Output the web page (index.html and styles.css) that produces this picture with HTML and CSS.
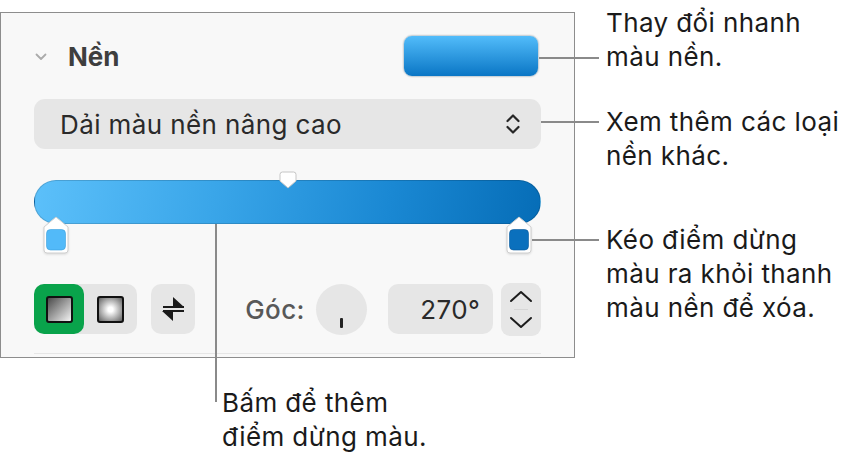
FILE: index.html
```html
<!DOCTYPE html>
<html lang="vi">
<head>
  <meta charset="UTF-8">
  <meta name="viewport" content="width=device-width, initial-scale=1.0">
  <title>Nền - Dải màu</title>
  <link rel="stylesheet" href="styles.css">
</head>
<body>
  <div class="figure">
    <div class="panel">
      <div class="section-head">
        <svg class="disclosure" width="12" height="8" viewBox="0 0 12 8"><path d="M1.5 1.5 L6 6 L10.5 1.5" fill="none" stroke="#ababab" stroke-width="1.8" stroke-linecap="round" stroke-linejoin="round"/></svg>
        <h2>Nền</h2>
        <div class="color-well"></div>
      </div>

      <div class="popup">
        <span>Dải màu nền nâng cao</span>
        <svg width="18" height="26" viewBox="0 0 18 26"><path d="M3.5 10 L9 4.5 L14.5 10 M3.5 16 L9 21.5 L14.5 16" fill="none" stroke="#262626" stroke-width="2.2" stroke-linecap="round" stroke-linejoin="round"/></svg>
      </div>

      <div class="gradient">
        <div class="gradient-bar"></div>
        <svg class="midpoint" width="18" height="18" viewBox="0 0 18 18"><path d="M3.5 1 H14.5 Q17 1 17 3.5 V10 L9 17 L1 10 V3.5 Q1 1 3.5 1 Z" fill="#fff" stroke="#c6c6c6" stroke-width="1"/></svg>
        <div class="stops">
          <svg class="stop" style="--pos: 0" width="26" height="38" viewBox="0 0 26 38"><path d="M13 1 L25 11 V34 Q25 37 22 37 H4 Q1 37 1 34 V11 Z" fill="#fff" stroke="#cfcfcf" stroke-width="1"/><rect x="3.5" y="13.5" width="19" height="20.5" rx="4" fill="#52baf9" stroke="#3a9fdc" stroke-width="0.6"/></svg>
          <svg class="stop" style="--pos: 1" width="26" height="38" viewBox="0 0 26 38"><path d="M13 1 L25 11 V34 Q25 37 22 37 H4 Q1 37 1 34 V11 Z" fill="#fff" stroke="#cfcfcf" stroke-width="1"/><rect x="3.5" y="13.5" width="19" height="20.5" rx="4" fill="#0a70bd" stroke="#07589a" stroke-width="0.6"/></svg>
        </div>
      </div>

      <div class="controls">
        <div class="segmented">
          <div class="seg seg-on">
            <span class="swatch swatch-linear"></span>
          </div>
          <div class="seg">
            <span class="swatch swatch-radial"></span>
          </div>
        </div>
        <div class="icon-btn">
          <svg width="26" height="30" viewBox="0 0 26 30"><path d="M3 13 H24 M3 17 H24" stroke="#1a1a1a" stroke-width="2.2"/><path d="M13 3 L24 13 H13 Z M13 27 L2 17 H13 Z" fill="#1a1a1a"/></svg>
        </div>
        <span class="angle-label">Góc:</span>
        <div class="knob"><span class="knob-tick"></span></div>
        <div class="number-field">270°</div>
        <div class="stepper">
          <svg width="28" height="53" viewBox="0 0 28 53"><path d="M4 18 L14 9 L24 18" fill="none" stroke="#1c1c1c" stroke-width="2" stroke-linecap="round" stroke-linejoin="round"/><path d="M7 26.5 H21" stroke="#d6d6d6" stroke-width="1"/><path d="M4 35 L14 44 L24 35" fill="none" stroke="#1c1c1c" stroke-width="2" stroke-linecap="round" stroke-linejoin="round"/></svg>
        </div>
      </div>

      <div class="panel-rule"></div>
    </div>

    <div class="notes">
      <p class="note note-well">Thay đổi nhanh<br>màu nền.</p>
      <p class="note note-popup">Xem thêm các loại<br>nền khác.</p>
      <p class="note note-stop">Kéo điểm dừng<br>màu ra khỏi thanh<br>màu nền để xóa.</p>
    </div>

    <p class="note note-add">Bấm để thêm<br>điểm dừng màu.</p>

    <!-- leader lines -->
    <span class="leader leader-well"></span>
    <span class="leader leader-popup"></span>
    <span class="leader leader-stop"></span>
    <span class="leader leader-add"></span>
  </div>
</body>
</html>
```

FILE: styles.css
```css
body {
  margin: 0;
  background: #fff;
  font-family: Inter, "Noto Sans", sans-serif;
  color: #1d1d1d;
  letter-spacing: 0.4px;
}
.figure {
  position: relative;
  width: 859px;
  height: 455px;
  display: grid;
  grid-template-columns: 575px 1fr;
  grid-template-rows: 358px 1fr;
  column-gap: 31px;
}
.panel {
  margin-top: 12px;
  box-sizing: border-box;
  height: 346px;
  border: 1px solid #8d8d8d;
  background: #f8f8f8;
  padding: 22px 33px 0 33px;
  position: relative;
}
.section-head {
  display: flex;
  align-items: center;
  height: 42px;
}
.disclosure {
  margin-left: 1px;
  margin-top: 2px;
}
.section-head h2 {
  margin: 0 0 0 21px;
  font-size: 26px;
  font-weight: 700;
  letter-spacing: 0;
  color: #3e3e3e;
  flex: 1;
}
.color-well {
  width: 136px;
  height: 42px;
  margin-right: 2px;
  box-sizing: border-box;
  border-radius: 9px;
  border: 1px solid #c9d3da;
  background: linear-gradient(#52bcfa, #0a76c5);
  box-shadow: 0 0 0 1px rgba(0, 0, 0, 0.04);
}
.popup {
  margin-top: 22px;
  height: 50px;
  border-radius: 11px;
  background: #e6e6e6;
  display: flex;
  align-items: center;
  justify-content: space-between;
  padding: 0 19px 0 26px;
  font-size: 26px;
  color: #2a2a2a;
}
.gradient {
  position: relative;
  margin-top: 31px;
}
.gradient-bar {
  height: 44px;
  box-sizing: border-box;
  border-radius: 22px;
  border: 1px solid rgba(0, 0, 0, 0.14);
  background: linear-gradient(100deg, #5cc0fa 0%, #3aa6e9 35%, #1a88d3 70%, #066db7 100%);
}
.midpoint {
  position: absolute;
  top: -9px;
  left: 245px;
}
.stops {
  position: relative;
  height: 37px;
  margin-top: -8px;
}
.stop {
  position: absolute;
  top: 0;
  left: calc(22px + (100% - 44px) * var(--pos));
  transform: translateX(-50%);
  filter: drop-shadow(0 1px 1px rgba(0, 0, 0, 0.12));
}
.controls {
  display: flex;
  align-items: center;
  height: 50px;
  margin-top: 31px;
}
.segmented {
  display: flex;
  background: #e5e5e5;
  border-radius: 10px;
  width: 104px;
  height: 50px;
}
.seg {
  width: 52px;
  display: flex;
  align-items: center;
  justify-content: center;
  border-radius: 10px;
}
.seg-on {
  width: 50px;
  background: #09a34b;
}
.swatch {
  width: 27px;
  height: 27px;
  box-sizing: border-box;
  border: 2.5px solid #111;
  border-radius: 3px;
}
.swatch-linear {
  background: linear-gradient(135deg, #4a4a4a, #f4f4f4);
}
.swatch-radial {
  background: radial-gradient(circle, #fff 15%, #6a6a6a 95%);
}
.icon-btn {
  margin-left: 14px;
  width: 44px;
  height: 50px;
  border-radius: 10px;
  background: #e6e6e6;
  display: flex;
  align-items: center;
  justify-content: center;
}
.angle-label {
  margin-left: 50px;
  font-size: 26px;
  font-weight: 500;
  color: #585858;
}
.knob {
  margin-left: 11px;
  width: 51px;
  height: 51px;
  border-radius: 50%;
  background: #e6e6e6;
  position: relative;
}
.knob-tick {
  position: absolute;
  left: 24px;
  top: 34px;
  width: 3px;
  height: 10px;
  border-radius: 1px;
  background: #222;
}
.number-field {
  margin-left: 21px;
  width: 106px;
  height: 50px;
  box-sizing: border-box;
  border-radius: 10px;
  background: #e6e6e6;
  font-size: 26px;
  color: #2a2a2a;
  display: flex;
  align-items: center;
  justify-content: flex-end;
  padding-right: 13px;
}
.stepper {
  margin-left: 8px;
  width: 40px;
  height: 53px;
  border-radius: 9px;
  background: #e6e6e6;
  display: flex;
  align-items: center;
  justify-content: center;
}
.panel-rule {
  margin-top: 19px;
  height: 1px;
  background: #e6e6e6;
}
.notes {
  padding-top: 6px;
}
.note {
  margin: 0;
  font-size: 26px;
  line-height: 34px;
  color: #1a1a1a;
}
.note-popup {
  margin-top: 31px;
}
.note-stop {
  margin-top: 50px;
}
.note-add {
  grid-column: 1 / 2;
  margin: 28px 0 0 222px;
}
.leader {
  position: absolute;
  background: #8a8a8a;
}
.leader-well { left: 539px; top: 57px; width: 60px; height: 2px; }
.leader-popup { left: 541px; top: 121px; width: 58px; height: 2px; }
.leader-stop { left: 532px; top: 239px; width: 67px; height: 2px; }
.leader-add { left: 215px; top: 224px; width: 2px; height: 178px; }
```
